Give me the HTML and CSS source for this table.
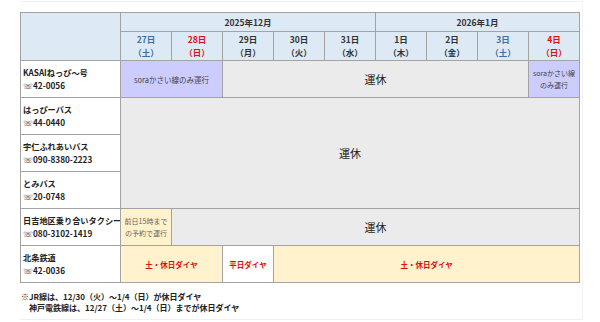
FILE: index.html
```html
<!DOCTYPE html>
<html lang="ja">
<head>
<meta charset="utf-8">
<link rel="stylesheet" href="styles.css">
</head>
<body>
<div class="frame">
<table class="sched">
  <colgroup>
    <col class="c-name">
    <col class="c-day"><col class="c-day"><col class="c-day"><col class="c-day"><col class="c-day">
    <col class="c-day"><col class="c-day"><col class="c-day"><col class="c-day">
  </colgroup>
  <thead>
    <tr class="h1">
      <th rowspan="2" class="corner"></th>
      <th colspan="5">2025年12月</th>
      <th colspan="4">2026年1月</th>
    </tr>
    <tr class="h2">
      <th class="sat">27日<br>（土）</th>
      <th class="sun">28日<br>（日）</th>
      <th>29日<br>（月）</th>
      <th>30日<br>（火）</th>
      <th>31日<br>（水）</th>
      <th>1日<br>（木）</th>
      <th>2日<br>（金）</th>
      <th class="sat">3日<br>（土）</th>
      <th class="sun">4日<br>（日）</th>
    </tr>
  </thead>
  <tbody>
    <tr class="r">
      <td class="name">KASAIねっぴ～号<br><span class="tel">☏</span>42-0056</td>
      <td colspan="2" class="sora">soraかさい線のみ運行</td>
      <td colspan="6" class="off">運休</td>
      <td class="sora small">soraかさい線<br>のみ運行</td>
    </tr>
    <tr class="r">
      <td class="name">はっぴーバス<br><span class="tel">☏</span>44-0440</td>
      <td colspan="9" rowspan="3" class="off">運休</td>
    </tr>
    <tr class="r">
      <td class="name">宇仁ふれあいバス<br><span class="tel">☏</span>090-8380-2223</td>
    </tr>
    <tr class="r">
      <td class="name">とみバス<br><span class="tel">☏</span>20-0748</td>
    </tr>
    <tr class="r">
      <td class="name">日吉地区乗り合いタクシー<br><span class="tel">☏</span>080-3102-1419</td>
      <td class="yel small">前日15時まで<br>の予約で運行</td>
      <td colspan="8" class="off">運休</td>
    </tr>
    <tr class="r">
      <td class="name">北条鉄道<br><span class="tel">☏</span>42-0036</td>
      <td colspan="2" class="yel dia">土・休日ダイヤ</td>
      <td class="wht dia">平日ダイヤ</td>
      <td colspan="6" class="yel dia">土・休日ダイヤ</td>
    </tr>
  </tbody>
</table>
<div class="notes">
  <p>※JR線は、12/30（火）～1/4（日）が休日ダイヤ</p>
  <p class="indent">神戸電鉄線は、12/27（土）～1/4（日）までが休日ダイヤ</p>
</div>
</div>
</body>
</html>
```
FILE: styles.css
```css
html, body {
  margin: 0;
  padding: 0;
  background: #fff;
}
body {
  width: 600px;
  height: 322px;
  overflow: hidden;
  font-family: "Noto Sans CJK JP", "Noto Sans", sans-serif;
  color: #222;
}
.frame {
  margin: 1px 17px 0 20px;
  border-top: 1px solid #f0f0f0;
  border-right: 1px solid #f3f3f3;
  border-bottom: 1px solid #f0f0f0;
  height: 319px;
  padding-top: 10px;
  box-sizing: border-box;
}
.sched {
  border-collapse: collapse;
  table-layout: fixed;
  width: 560px;
  font-size: 8px;
}
.c-name { width: 100px; }
.c-day { width: 51px; }
.sched th, .sched td {
  border: 1px solid #a3a3a3;
  padding: 0;
  text-align: center;
  vertical-align: middle;
}
.sched th {
  background: #dde9f5;
  font-weight: bold;
  font-size: 8.5px;
  line-height: 13px;
  color: #333;
}
.h1 th { height: 18px; }
.h2 th { height: 28px; }
.sat { color: #3a6fa8 !important; }
.sun { color: #e01010 !important; }
.r td { height: 36px; }
.name {
  text-align: left !important;
  padding-left: 2px !important;
  font-weight: bold;
  font-size: 8.2px;
  line-height: 13px;
  background: #fff;
  color: #222;
  white-space: nowrap;
  overflow: hidden;
}
.tel {
  font-family: "DejaVu Sans", sans-serif;
  font-weight: normal;
  color: #333;
  font-size: 8px;
}
.sora {
  background: #ccccff;
  color: #444;
  font-size: 7.5px;
}
.small {
  font-size: 7px;
  line-height: 12px;
}
.off {
  background: #ebebeb;
  font-size: 11px;
  color: #222;
}
.yel {
  background: #fff2cc;
  color: #666;
}
.wht { background: #fff; }
.dia {
  color: #e01010 !important;
  font-weight: bold;
  font-size: 7.5px;
}
.notes {
  margin-top: 8px;
  font-size: 8px;
  font-weight: bold;
  color: #222;
  line-height: 11px;
}
.notes p { margin: 0 0 0 1px; }
.notes .indent { padding-left: 8px; }
```
